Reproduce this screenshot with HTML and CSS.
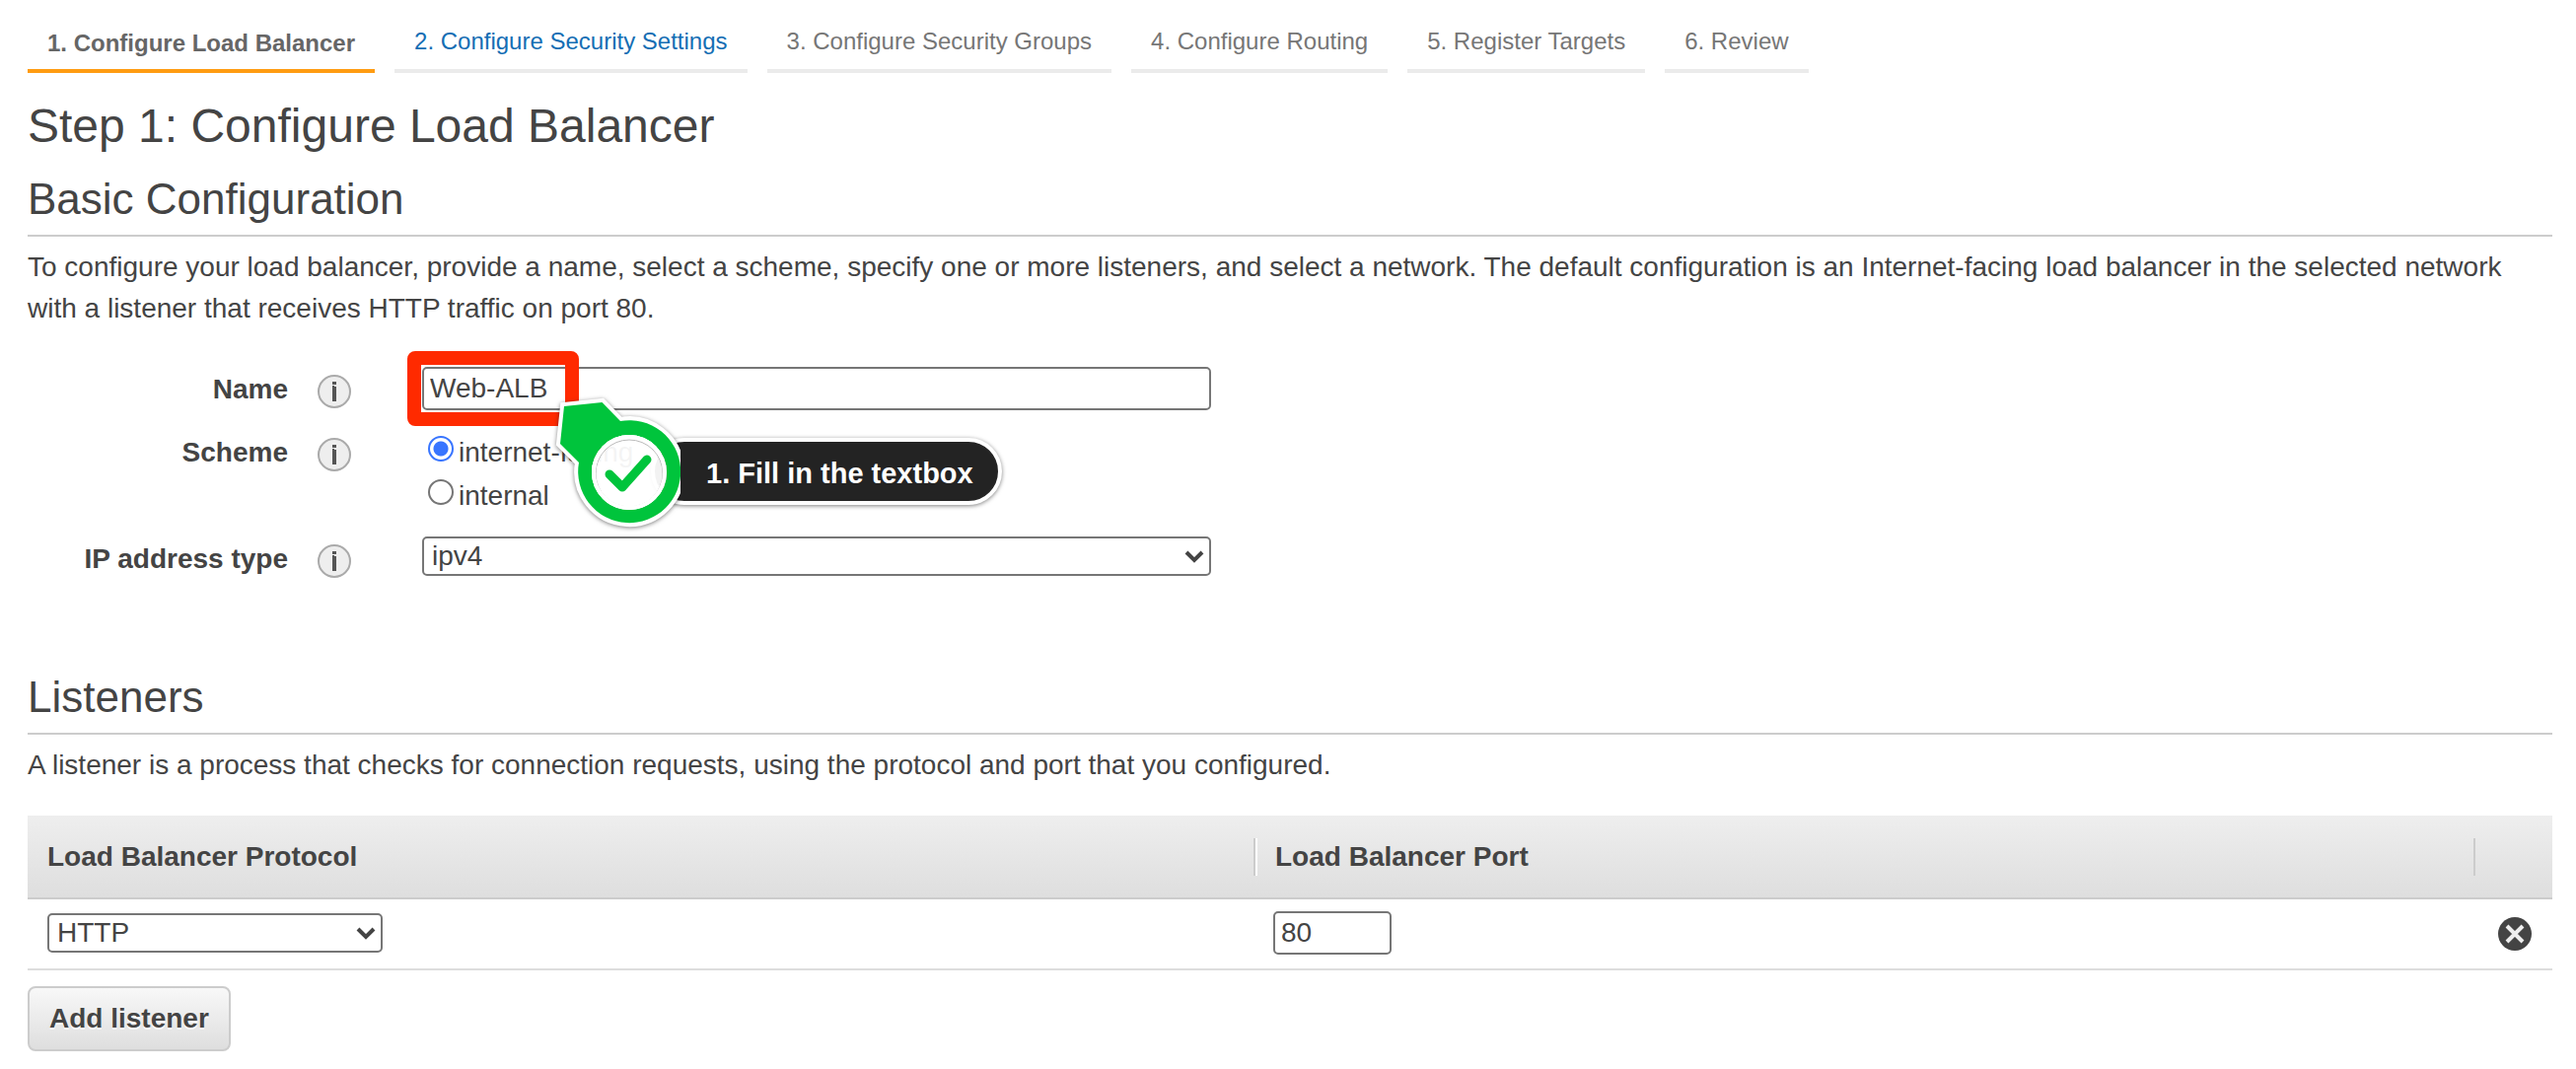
FILE: index.html
```html
<!DOCTYPE html>
<html lang="en">
<head>
<meta charset="utf-8">
<meta name="viewport" content="width=device-width, initial-scale=1">
<title>Configure Load Balancer</title>
<link rel="stylesheet" href="styles.css">
</head>
<body>
<main class="page">
  <nav class="steps" aria-label="Wizard steps">
    <span class="step step-active" aria-current="step">1. Configure Load Balancer</span>
    <a class="step step-link" href="#security">2. Configure Security Settings</a>
    <span class="step">3. Configure Security Groups</span>
    <span class="step">4. Configure Routing</span>
    <span class="step">5. Register Targets</span>
    <span class="step">6. Review</span>
  </nav>

  <h1 class="title">Step 1: Configure Load Balancer</h1>

  <section>
    <h2 class="section-title">Basic Configuration</h2>
    <p class="intro">To configure your load balancer, provide a name, select a scheme, specify one or more listeners, and select a network. The default configuration is an Internet-facing load balancer in the selected network with a listener that receives HTTP traffic on port 80.</p>

    <form class="form">
      <div class="field">
        <label class="label" for="name">Name</label>
        <svg class="info" viewBox="0 0 36 36" aria-hidden="true"><circle cx="18" cy="18" r="16"/><path d="M18 8v3M18 13v15M16 14h2"/></svg>
        <div class="control">
          <input class="box text-box" id="name" type="text" value="Web-ALB">
          <div class="highlight"></div>
          <div class="callout">
            <div class="callout-text">1. Fill in the textbox</div>
            <svg class="callout-badge" viewBox="0 0 140 160" aria-hidden="true">
              <path class="badge-edge" d="M22 22L60.500 18L79 37A52 52 0 1 1 37 79L18 60Z"/>
              <path class="badge-body" fill-rule="evenodd" d="M22 22L60.500 18L79 37A52 52 0 1 1 37 79L18 60ZM88 51a38 38 0 1 0 0 76a38 38 0 1 0 0-76Z"/>
              <circle class="badge-disc" cx="88" cy="89" r="38"/>
              <circle class="badge-shade" cx="88" cy="90" r="34"/>
              <circle class="badge-ring" cx="88" cy="89" r="36"/>
              <path class="badge-check" d="M68 91L81 104L106 76"/>
            </svg>
          </div>
        </div>
      </div>
      <div class="field" role="radiogroup" aria-labelledby="scheme">
        <span class="label" id="scheme">Scheme</span>
        <svg class="info" viewBox="0 0 36 36" aria-hidden="true"><circle cx="18" cy="18" r="16"/><path d="M18 8v3M18 13v15M16 14h2"/></svg>
        <div class="control options">
          <label class="option"><input class="radio" type="radio" name="scheme" checked>internet-facing</label>
          <label class="option"><input class="radio" type="radio" name="scheme">internal</label>
        </div>
      </div>
      <div class="field">
        <label class="label" for="ip-type">IP address type</label>
        <svg class="info" viewBox="0 0 36 36" aria-hidden="true"><circle cx="18" cy="18" r="16"/><path d="M18 8v3M18 13v15M16 14h2"/></svg>
        <div class="control">
          <div class="select-wrap">
            <select class="box select" id="ip-type"><option>ipv4</option></select>
            <svg class="chevron" viewBox="0 0 20 14" aria-hidden="true"><path d="M2 3l8 8l8-8"/></svg>
          </div>
        </div>
      </div>
    </form>
  </section>

  <section>
    <h2 class="section-title">Listeners</h2>
    <p class="intro">A listener is a process that checks for connection requests, using the protocol and port that you configured.</p>
    <table class="table">
      <thead>
        <tr>
          <th class="col-protocol" scope="col"><div class="head">Load Balancer Protocol</div></th>
          <th scope="col"><div class="head">Load Balancer Port</div></th>
          <th class="col-remove"><div class="head"></div></th>
        </tr>
      </thead>
      <tbody>
        <tr>
          <td>
            <div class="select-wrap protocol">
              <select class="box select" aria-label="Load Balancer Protocol"><option>HTTP</option></select>
              <svg class="chevron" viewBox="0 0 20 14" aria-hidden="true"><path d="M2 3l8 8l8-8"/></svg>
            </div>
          </td>
          <td><input class="box text-box port" type="text" value="80" aria-label="Load Balancer Port"></td>
          <td>
            <button class="remove" type="button" aria-label="Remove listener"><svg viewBox="0 0 36 36" aria-hidden="true"><circle cx="18" cy="18" r="17"/><path d="M10 10l16 16M26 10l-16 16"/></svg></button>
          </td>
        </tr>
      </tbody>
    </table>
    <button class="add" type="button">Add listener</button>
  </section>
</main>
</body>
</html>
```

FILE: styles.css
```css
* {
  box-sizing: border-box;
}

body {
  margin: 0;
  background: #fff;
  color: #444;
  font: 28px/42px "Liberation Sans", Arial, sans-serif;
}

.page {
  padding: 14px 24px 20px 28px;
}

.steps {
  display: flex;
  flex-wrap: wrap;
  gap: 20px;
  font-size: 24px;
}

.step {
  height: 60px;
  padding: 7px 20px 0;
  border-bottom: 4px solid #ebebeb;
  color: #767676;
  text-decoration: none;
}

.step-active {
  padding-top: 9px;
  border-color: #ff9c12;
  color: #666;
  font-weight: bold;
}

.step-link {
  color: #146eb4;
}

.title {
  margin: 24px 0 0;
  font-size: 48px;
  font-weight: normal;
  line-height: 60px;
}

.section-title {
  margin: 16px 0 0;
  padding-bottom: 8px;
  border-bottom: 2px solid #ccc;
  font-size: 44px;
  font-weight: normal;
  line-height: 56px;
}

.intro {
  margin: 10px 0 0;
}

.form {
  display: grid;
  gap: 20px;
  padding: 38px 0 75px;
}

.field {
  display: flex;
  align-items: flex-start;
}

.label {
  width: 264px;
  padding-top: 2px;
  font-weight: bold;
  text-align: right;
}

.info {
  width: 36px;
  height: 36px;
  margin: 7px 71px 0 29px;
  fill: #eee;
  stroke: #aaa;
  stroke-width: 2;
}

.info path {
  stroke: #555;
  stroke-width: 4;
}

.control {
  position: relative;
  width: 800px;
}

.box {
  display: block;
  width: 100%;
  margin: 0;
  border: 2px solid #767676;
  border-radius: 5px;
  background: #fff;
  color: #444;
  font: inherit;
}

.text-box {
  height: 44px;
  padding: 0 6px;
}

.select-wrap {
  display: grid;
  align-items: center;
}

.select-wrap > * {
  grid-area: 1 / 1;
}

.select {
  height: 40px;
  padding: 0 8px;
  line-height: 32px;
  appearance: none;
}

.chevron {
  justify-self: end;
  width: 20px;
  height: 14px;
  margin-right: 7px;
  fill: none;
  stroke: #444;
  stroke-width: 4;
  pointer-events: none;
}

.options {
  height: 88px;
  padding: 2px 0 0;
}

.option {
  display: flex;
  height: 44px;
}

.radio {
  width: 26px;
  height: 26px;
  margin: 4px 5px 0 6px;
  border: 2px solid #767676;
  border-radius: 50%;
  background: #fff;
  appearance: none;
}

.radio:checked {
  border-color: #3875ff;
  background: radial-gradient(circle, #3875ff 7px, #fff 8px);
}

.highlight {
  position: absolute;
  top: -16px;
  left: -15px;
  width: 174px;
  height: 76px;
  border: 14px solid #ff2a00;
  border-radius: 8px;
}

.callout {
  position: absolute;
  z-index: 1;
  top: 18px;
  left: 122px;
  width: 480px;
  height: 160px;
}

.callout-text {
  position: absolute;
  top: 54px;
  left: 110px;
  height: 68px;
  padding: 12px 25px 0 52px;
  border: 4px solid #fff;
  border-radius: 34px;
  background: #232323;
  box-shadow: 0 1px 4px rgba(0, 0, 0, .5);
  color: #fff;
  font-size: 29px;
  font-weight: bold;
  line-height: 40px;
  white-space: nowrap;
}

.callout-badge {
  position: absolute;
  top: 0;
  left: 0;
  width: 140px;
  height: 160px;
}

.badge-edge {
  fill: none;
  stroke: #fff;
  stroke-width: 8;
  filter: drop-shadow(0 1px 2px rgba(0, 0, 0, .5));
}

.badge-body {
  fill: #00c43c;
}

.badge-disc {
  fill: #fff;
  fill-opacity: .94;
}

.badge-shade {
  fill: none;
  stroke: #bbb;
  stroke-width: 1;
}

.badge-ring {
  fill: none;
  stroke: #fff;
  stroke-width: 4;
}

.badge-check {
  fill: none;
  stroke: #00c43c;
  stroke-width: 9;
  stroke-linecap: round;
  stroke-linejoin: round;
}

.table {
  width: 100%;
  margin-top: 30px;
  border-collapse: collapse;
  table-layout: fixed;
}

.table thead {
  background: linear-gradient(#eee, #dedede);
}

.table th {
  height: 84px;
  padding: 0;
  border-bottom: 2px solid #ccc;
  text-align: left;
}

.head {
  height: 38px;
  padding-left: 20px;
  line-height: 38px;
}

.table th + th .head {
  border-left: 2px solid #ccc;
  box-shadow: inset 2px 0 #fff;
}

.table th.col-remove .head {
  box-shadow: none;
}

.table td {
  height: 72px;
  padding: 0 20px 2px;
  border-bottom: 2px solid #ddd;
}

.col-protocol {
  width: 1243px;
}

.col-remove {
  width: 80px;
}

.protocol {
  width: 340px;
}

.port {
  width: 120px;
}

.remove {
  display: block;
  width: 36px;
  height: 36px;
  margin: 2px 0 0 auto;
  padding: 0;
  border: 0;
  background: none;
}

.remove svg {
  display: block;
  fill: #444;
  stroke: #eee;
  stroke-width: 4;
}

.remove circle {
  stroke: none;
}

.add {
  height: 66px;
  margin-top: 16px;
  padding: 0 20px;
  border: 2px solid #ccc;
  border-radius: 8px;
  background: linear-gradient(#f8f8f8, #dedede);
  color: #444;
  font: inherit;
  font-weight: bold;
  text-shadow: 0 2px #fff;
}
```
